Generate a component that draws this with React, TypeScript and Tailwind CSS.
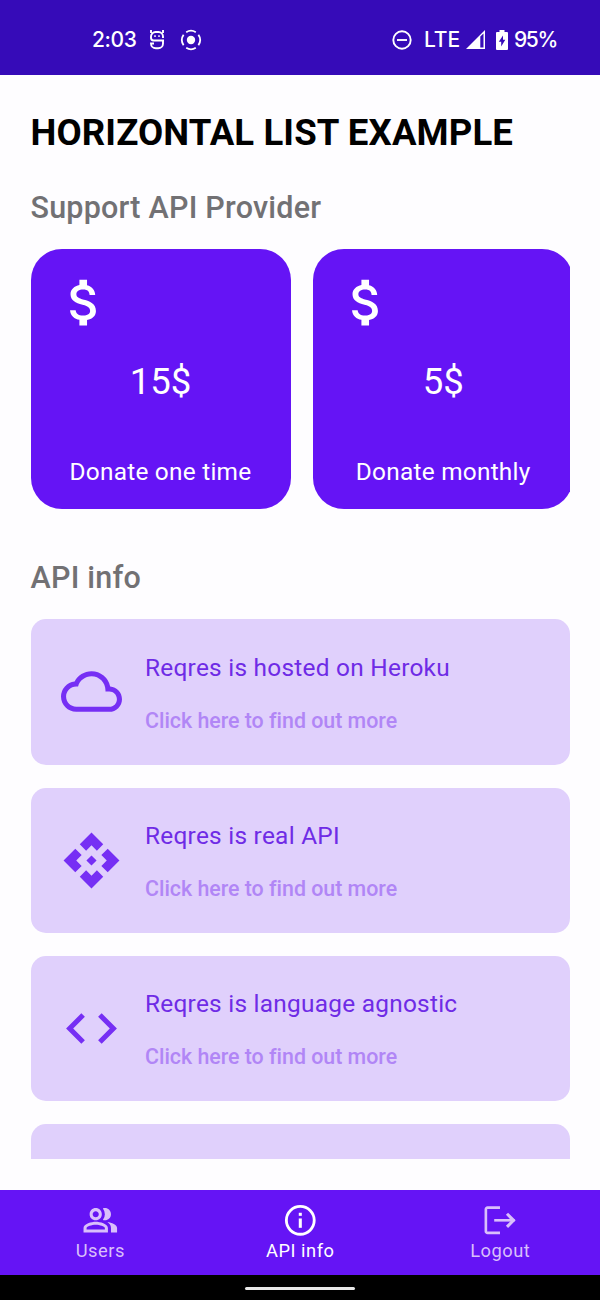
import type { ComponentType } from "react";
import {
  MdApi,
  MdAttachMoney,
  MdCloudQueue,
  MdCode,
  MdOutlinePeopleAlt,
} from "react-icons/md";

type IconType = ComponentType<{ className?: string }>;

const donations = [
  { amount: "15$", label: "Donate one time" },
  { amount: "5$", label: "Donate monthly" },
];

const infos: { icon: IconType; title: string }[] = [
  { icon: MdCloudQueue, title: "Reqres is hosted on Heroku" },
  { icon: MdApi, title: "Reqres is real API" },
  { icon: MdCode, title: "Reqres is language agnostic" },
];

function InfoIcon({ className }: { className?: string }) {
  return (
    <svg viewBox="0 0 36 36" className={className} fill="none" stroke="currentColor">
      <circle cx="18" cy="18" r="13.7" strokeWidth="2.8" />
      <path d="M18 16.2v9.2" strokeWidth="3" />
      <path d="M18 10.6v3" strokeWidth="3" />
    </svg>
  );
}

function LogoutIcon({ className }: { className?: string }) {
  return (
    <svg viewBox="0 0 36 36" className={className} fill="none" stroke="currentColor">
      <path d="M17.7 5.6H5.4a1.6 1.6 0 0 0-1.6 1.6v21.6a1.6 1.6 0 0 0 1.6 1.6h12.3" strokeWidth="2.6" />
      <path d="M12 18h20" strokeWidth="2.6" />
      <path d="M24.6 11.6 31 18l-6.4 6.4" strokeWidth="3" />
    </svg>
  );
}

function StatusBar() {
  return (
    <header className="flex h-[75px] shrink-0 items-center bg-[#360bb8] pt-[4px] pl-[92px] pr-[43px] font-['Inter',sans-serif] text-[21px] leading-none font-medium text-white">
      <span className="w-[56px] tracking-[-0.4px]">2:03</span>
      <svg width="18" height="22" viewBox="0 0 18 22" fill="none" stroke="currentColor" strokeWidth="1.9">
        <path d="M3 1v3M15 1v3" />
        <path d="M3 9V7.500A4.500 4.500 0 0 1 7.500 3h3A4.500 4.500 0 0 1 15 7.500V9" />
        <path d="M16 11.500H5.600A2.800 2.800 0 0 1 3 8.700" />
        <path d="M15 11.500v3a4.800 4.800 0 0 1-4.800 4.800H7.800A4.800 4.800 0 0 1 3 14.500h3" />
        <path d="M7 6.200v1.800M11 6.200v1.800" strokeWidth="1.500" />
      </svg>
      <svg className="ml-[14px]" width="22" height="22" viewBox="0 0 22 22" fill="none" stroke="currentColor" strokeWidth="1.800">
        <circle cx="11" cy="11" r="4.200" fill="currentColor" stroke="none" />
        <path d="M6.200 3.200a9.100 9.100 0 0 1 9.600 0M18.400 5.800a9.100 9.100 0 0 1 0 10.400M15.800 18.800a9.100 9.100 0 0 1-9.600 0M3.600 16.200a9.100 9.100 0 0 1 0-10.400" />
      </svg>
      <div className="ml-auto flex items-center">
        <svg width="20" height="20" viewBox="0 0 20 20" fill="none" stroke="currentColor" strokeWidth="1.900">
          <circle cx="10" cy="10" r="8.700" />
          <path d="M5 10h10" />
        </svg>
        <span className="ml-[12px] w-[42px] tracking-[-0.1px]">LTE</span>
        <svg width="19" height="19" viewBox="0 0 19 19">
          <path fill="currentColor" fillRule="evenodd" d="M0 19 19 0v19zM14.300 6.500v11h3.200v-14z" />
        </svg>
        <svg className="ml-[11px]" width="12" height="20" viewBox="0 0 12 20">
          <path fill="currentColor" d="M3.500 0h5v2H11a1 1 0 0 1 1 1v16a1 1 0 0 1-1 1H1a1 1 0 0 1-1-1V3a1 1 0 0 1 1-1h2.500z" />
          <path fill="#360bb8" d="M7 5.500v4.200h2.300L5.200 16.500v-4.800H2.800z" />
        </svg>
        <span className="ml-[6px] w-[43px] tracking-[-1.4px]">95%</span>
      </div>
    </header>
  );
}

function DonationCard({ amount, label }: { amount: string; label: string }) {
  return (
    <article className="flex h-[260px] w-[260px] shrink-0 flex-col items-center rounded-[31px] bg-[#6514f5] px-[23px] pt-[23px] text-white">
      <MdAttachMoney className="size-[61px] shrink-0 self-start" />
      <span className="mt-[27px] text-[36.600px] leading-[44px]">{amount}</span>
      <span className="mt-[53px] text-[24.400px] leading-[30px] tracking-[0.24px]">{label}</span>
    </article>
  );
}

function InfoCard({ icon: Icon, title }: { icon: IconType; title: string }) {
  return (
    <article className="flex h-[145.300px] shrink-0 items-center gap-[23px] rounded-[15px] bg-[#e0d0fc] pl-[30.500px]">
      <Icon className="size-[61px] shrink-0 text-[#762ff4]" />
      <div className="flex flex-col gap-[23px] pt-[4.600px]">
        <span className="text-[24.400px] leading-[30px] tracking-[0.26px] text-[#6f2be6]">{title}</span>
        <span className="text-[21.400px] leading-[30px] font-medium tracking-[-0.02px] text-[#b186f6]">
          Click here to find out more
        </span>
      </div>
    </article>
  );
}

function NavItem({ icon: Icon, label, active }: { icon: IconType; label: string; active?: boolean }) {
  return (
    <button
      className={`flex flex-1 flex-col items-center pt-[12.500px] ${active ? "text-white" : "text-[#d9bffb]"}`}
    >
      <Icon className="size-[36.600px]" />
      <span className="mt-[0.500px] pl-[0.500px] text-[18.300px] leading-[24px] tracking-[0.52px]">{label}</span>
    </button>
  );
}

export default function App() {
  return (
    <div className="flex h-[1300px] w-[600px] flex-col overflow-hidden bg-[#fefdff] font-['Roboto',sans-serif]">
      <StatusBar />
      <main className="flex h-[1084px] shrink-0 flex-col overflow-hidden pr-[30.500px] pl-[30.500px]">
        <h1 className="mt-[36px] text-[36.600px] leading-[44px] font-bold tracking-[0.12px] whitespace-nowrap text-black">
          HORIZONTAL LIST EXAMPLE
        </h1>
        <h2 className="mt-[35px] text-[30.500px] leading-[36px] font-medium tracking-[0.22px] text-[#727174]">
          Support API Provider
        </h2>
        <section className="mt-[23.300px] flex shrink-0 gap-[22.700px] overflow-hidden">
          {donations.map((d) => (
            <DonationCard key={d.amount} {...d} />
          ))}
        </section>
        <h2 className="mt-[50.700px] text-[30.500px] leading-[36px] font-medium tracking-[0.22px] text-[#727174]">
          API info
        </h2>
        <section className="mt-[23.300px] flex shrink-0 flex-col gap-[23px]">
          {infos.map((i) => (
            <InfoCard key={i.title} {...i} />
          ))}
          <div className="h-[145.300px] shrink-0 rounded-[15px] bg-[#e0d0fc]" />
        </section>
      </main>
      <nav className="mt-[30.500px] flex h-[85.500px] shrink-0 bg-[#6514f5]">
        <NavItem icon={MdOutlinePeopleAlt} label="Users" />
        <NavItem icon={InfoIcon} label="API info" active />
        <NavItem icon={LogoutIcon} label="Logout" />
      </nav>
      <footer className="flex flex-1 items-center justify-center bg-black pt-[2px]">
        <div className="h-[3px] w-[110px] rounded-full bg-[#e8e8e8]" />
      </footer>
    </div>
  );
}
